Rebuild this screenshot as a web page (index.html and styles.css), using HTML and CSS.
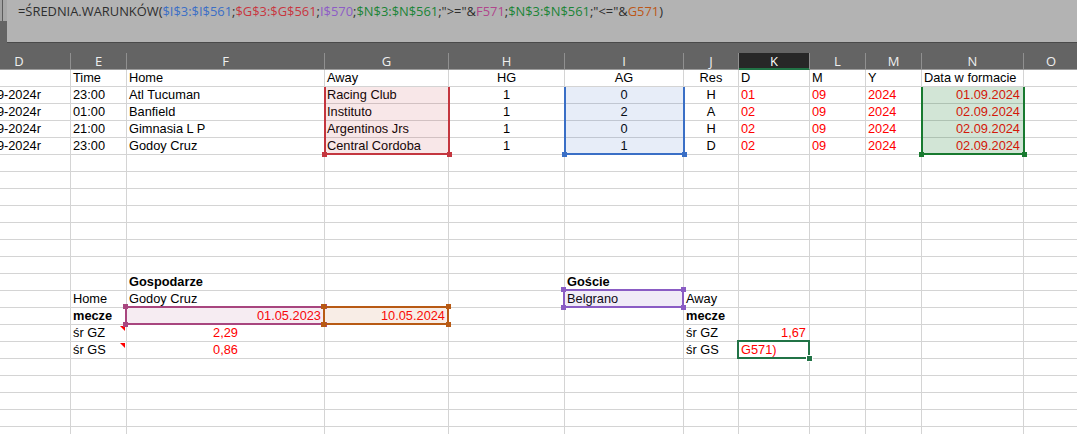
FILE: index.html
```html
<!DOCTYPE html>
<html lang="pl">
<head>
<meta charset="utf-8">
<title>Arkusz</title>
<link rel="stylesheet" href="styles.css">
</head>
<body>
<div class="app">
  <div class="fbar">
    <div class="stub"><div class="stub-top"></div></div>
    <div class="formula">=ŚREDNIA.WARUNKÓW(<span class="f-blue">$I$3:$I$561</span>;<span class="f-red">$G$3:$G$561</span>;<span class="f-purple">I$570</span>;<span class="f-green">$N$3:$N$561</span>;"&gt;="&amp;<span class="f-mag">F571</span>;<span class="f-green">$N$3:$N$561</span>;"&lt;="&amp;<span class="f-orange">G571</span>)</div>
  </div>
  <div class="band"></div>
  <div class="colhead">
    <div class="first">D</div><div>E</div><div>F</div><div>G</div><div>H</div><div>I</div><div>J</div><div class="active">K</div><div>L</div><div>M</div><div>N</div><div>O</div>
  </div>
  <div class="sheet">
    <div class="row"><div></div><div>Time</div><div>Home</div><div>Away</div><div class="ctr">HG</div><div class="ctr">AG</div><div class="ctr">Res</div><div>D</div><div>M</div><div>Y</div><div>Data w formacie</div><div></div></div>

    <div class="row"><div class="dcol"><span>01-09-2024r</span></div><div>23:00</div><div>Atl Tucuman</div><div>Racing Club<div class="sel s-red open"><i class="h bl"></i><i class="h br"></i></div></div><div class="ctr">1</div><div class="ctr">0<div class="sel s-blue open"><i class="h bl"></i><i class="h br"></i></div></div><div class="ctr">H</div><div class="red">01</div><div class="red">09</div><div class="red">2024</div><div class="red rt">01.09.2024<div class="sel s-green open"><i class="h bl"></i><i class="h br"></i></div></div><div></div></div>

    <div class="row"><div class="dcol"><span>02-09-2024r</span></div><div>01:00</div><div>Banfield</div><div>Instituto</div><div class="ctr">1</div><div class="ctr">2</div><div class="ctr">A</div><div class="red">02</div><div class="red">09</div><div class="red">2024</div><div class="red rt">02.09.2024</div><div></div></div>

    <div class="row"><div class="dcol"><span>02-09-2024r</span></div><div>21:00</div><div>Gimnasia L P</div><div>Argentinos Jrs</div><div class="ctr">1</div><div class="ctr">0</div><div class="ctr">H</div><div class="red">02</div><div class="red">09</div><div class="red">2024</div><div class="red rt">02.09.2024</div><div></div></div>

    <div class="row"><div class="dcol"><span>02-09-2024r</span></div><div>23:00</div><div>Godoy Cruz</div><div>Central Cordoba</div><div class="ctr">1</div><div class="ctr">1</div><div class="ctr">D</div><div class="red">02</div><div class="red">09</div><div class="red">2024</div><div class="red rt">02.09.2024</div><div></div></div>

    <div class="row"><div></div><div></div><div></div><div></div><div></div><div></div><div></div><div></div><div></div><div></div><div></div><div></div></div>
    <div class="row"><div></div><div></div><div></div><div></div><div></div><div></div><div></div><div></div><div></div><div></div><div></div><div></div></div>
    <div class="row"><div></div><div></div><div></div><div></div><div></div><div></div><div></div><div></div><div></div><div></div><div></div><div></div></div>
    <div class="row"><div></div><div></div><div></div><div></div><div></div><div></div><div></div><div></div><div></div><div></div><div></div><div></div></div>
    <div class="row"><div></div><div></div><div></div><div></div><div></div><div></div><div></div><div></div><div></div><div></div><div></div><div></div></div>
    <div class="row"><div></div><div></div><div></div><div></div><div></div><div></div><div></div><div></div><div></div><div></div><div></div><div></div></div>
    <div class="row"><div></div><div></div><div></div><div></div><div></div><div></div><div></div><div></div><div></div><div></div><div></div><div></div></div>

    <div class="row"><div></div><div></div><div class="b">Gospodarze</div><div></div><div></div><div class="b">Goście</div><div></div><div></div><div></div><div></div><div></div><div></div></div>

    <div class="row"><div></div><div>Home</div><div>Godoy Cruz</div><div></div><div></div><div>Belgrano<div class="sel s-purple box"><i class="h tl"></i><i class="h tr"></i><i class="h bl"></i><i class="h br"></i></div></div><div>Away</div><div></div><div></div><div></div><div></div><div></div></div>

    <div class="row"><div></div><div class="b">mecze</div><div class="red rt">01.05.2023<div class="sel s-mag box"><i class="h tl"></i><i class="h tr"></i><i class="h bl"></i><i class="h br"></i></div></div><div class="red rt">10.05.2024<div class="sel s-orange box"><i class="h tl"></i><i class="h tr"></i><i class="h bl"></i><i class="h br"></i></div></div><div></div><div></div><div class="b">mecze</div><div></div><div></div><div></div><div></div><div></div></div>

    <div class="row"><div></div><div class="note">śr GZ</div><div class="red ctr">2,29</div><div></div><div></div><div></div><div>śr GZ</div><div class="red rt">1,67</div><div></div><div></div><div></div><div></div></div>

    <div class="row"><div></div><div class="note">śr GS</div><div class="red ctr">0,86</div><div></div><div></div><div></div><div>śr GS</div><div class="red">G571)<div class="sel s-active box"><i class="h br"></i></div></div><div></div><div></div><div></div><div></div></div>

    <div class="row"><div></div><div></div><div></div><div></div><div></div><div></div><div></div><div></div><div></div><div></div><div></div><div></div></div>
    <div class="row"><div></div><div></div><div></div><div></div><div></div><div></div><div></div><div></div><div></div><div></div><div></div><div></div></div>
    <div class="row"><div></div><div></div><div></div><div></div><div></div><div></div><div></div><div></div><div></div><div></div><div></div><div></div></div>
    <div class="row"><div></div><div></div><div></div><div></div><div></div><div></div><div></div><div></div><div></div><div></div><div></div><div></div></div>
    <div class="row"><div></div><div></div><div></div><div></div><div></div><div></div><div></div><div></div><div></div><div></div><div></div><div></div></div>
  </div>
</div>
</body>
</html>
```
FILE: styles.css
```css
* { box-sizing: border-box; margin: 0; padding: 0; }
html, body { width: 1077px; height: 434px; overflow: hidden; background: #ffffff; }
body { font-family: "Liberation Sans", Arial, sans-serif; font-size: 12.8px; color: #000; }

.app { width: 1077px; height: 434px; overflow: hidden; }

/* formula bar */
.fbar { display: flex; height: 43px; background: #646464; }
.stub { width: 7px; background: #646464; }
.stub-top { height: 21px; background: linear-gradient(to right, #a2a2a2 0 2px, #5c5c5c 2px 3px, #a8a8a8 3px); }
.formula {
  flex: 1;
  background: #b3b3b3;
  border-bottom: 1px solid #4a4a4a;
  padding: 2px 0 0 11px;
  font-family: "Open Sans", "Noto Sans", sans-serif;
  font-size: 12.9px;
  line-height: 18px;
  color: #2e2e2e;
  white-space: nowrap;
}
.f-blue { color: #3b6fc6; }
.f-red { color: #c8363f; }
.f-purple { color: #8d5cc6; }
.f-green { color: #1a8436; }
.f-mag { color: #b0468c; }
.f-orange { color: #bd5718; }

.band { height: 10px; background: #646464; }

/* column letters */
.colhead, .row {
  display: grid;
  grid-template-columns: 71px 56px 198px 124px 116px 119px 55px 71px 56px 56px 102px 55px;
}
.colhead { height: 17px; background: #646464; }
.colhead > div {
  border-right: 1px solid #909090;
  border-bottom: 1px solid #9c9c9c;
  text-align: center;
  font-family: "Open Sans", "Noto Sans", sans-serif;
  font-size: 13px;
  line-height: 16px;
  color: #efefef;
}
.colhead > .first { padding-right: 32px; }
.colhead > .active {
  background: #272727;
  border-bottom-color: #217346;
  box-shadow: inset 0 -1px 0 #217346;
  color: #ffffff;
}

/* cells */
.row { height: 17px; }
.row > div {
  position: relative;
  border-right: 1px solid #d4d4d4;
  border-bottom: 1px solid #d4d4d4;
  padding: 0 2px;
  line-height: 16px;
  white-space: nowrap;
}
.row > .ctr { text-align: center; }
.row > .rt { text-align: right; padding-right: 3px; }
.row > .red { color: #ff0000; }
.row > .b { font-weight: bold; }
.row > .dcol {
  display: flex;
  justify-content: flex-end;
  overflow: hidden;
  padding-right: 29px;
}
.dcol > span { flex: none; }

.row > .note::after {
  content: "";
  position: absolute;
  top: 1px;
  right: 1px;
  border-top: 5px solid #ff0000;
  border-left: 5px solid transparent;
}

/* reference highlight boxes */
.sel {
  position: absolute;
  z-index: 2;
  pointer-events: none;
  border: 2px solid;
  background-clip: padding-box;
}
.sel.open { top: 0; left: -1px; border-top: none; height: 68px; }
.sel.box { top: -2px; left: -2px; height: 19px; }
.h { position: absolute; width: 5px; height: 5px; background: currentColor; }
.h.tl { top: -4px; left: -4px; }
.h.tr { top: -4px; right: -4px; }
.h.bl { bottom: -4px; left: -4px; }
.h.br { bottom: -4px; right: -4px; }

.s-red { width: 126px; color: #c4363f; border-color: #c4363f; background-color: rgba(196, 54, 63, 0.12); }
.s-blue { width: 121px; color: #3a6fc6; border-color: #3a6fc6; background-color: rgba(58, 111, 200, 0.12); }
.s-green { width: 104px; color: #187a2f; border-color: #187a2f; background-color: rgba(30, 123, 52, 0.2); }
.s-purple { width: 121px; color: #8a5cc4; border-color: #8a5cc4; background-color: rgba(132, 87, 193, 0.12); }
.s-mag { width: 200px; color: #a8467f; border-color: #a8467f; background-color: rgba(164, 65, 127, 0.1); }
.s-orange { width: 126px; color: #b85a14; border-color: #b85a14; background-color: rgba(200, 110, 50, 0.12); }
.s-active { width: 73px; color: #217346; border-color: #217346; background: none; }
.s-active .h.br { box-shadow: 0 0 0 1px #ffffff; }
```
